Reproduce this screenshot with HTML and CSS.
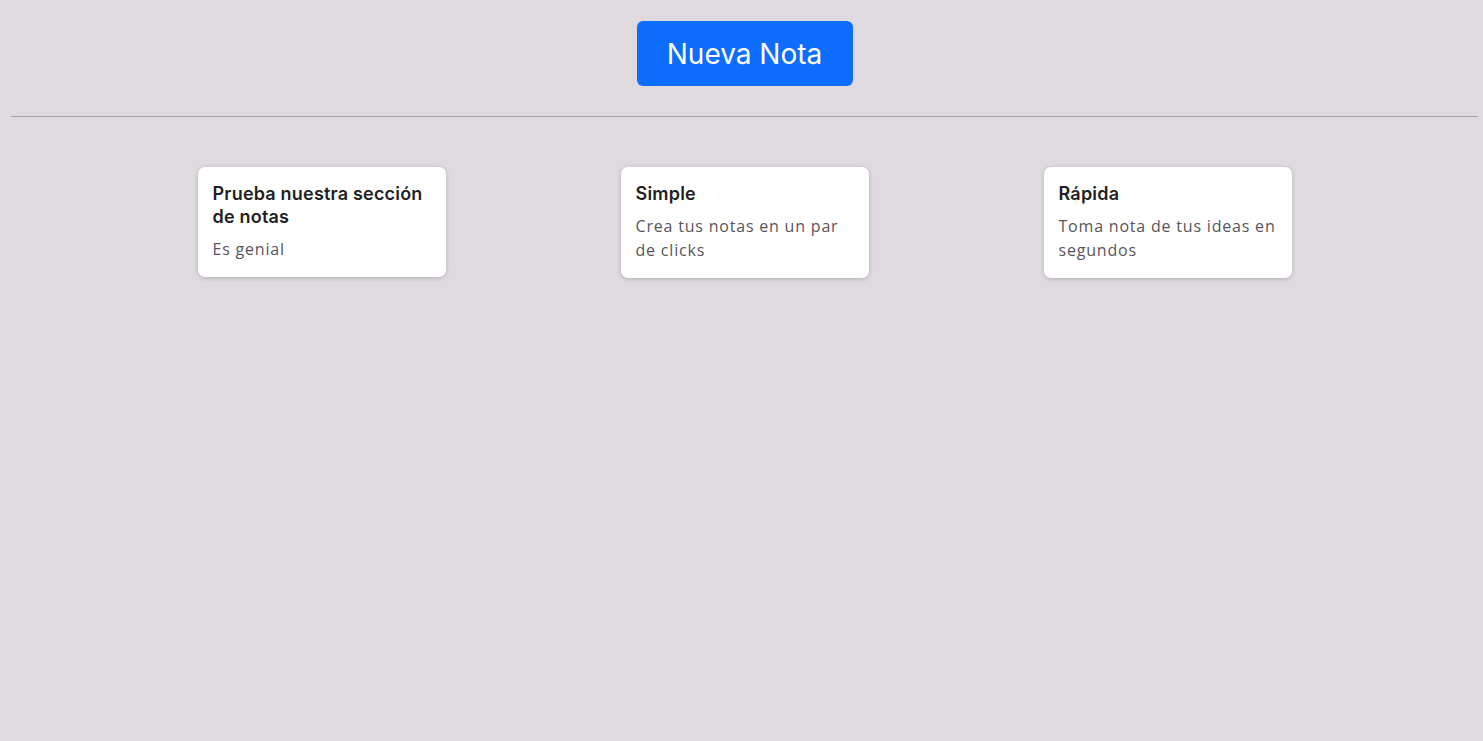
FILE: index.html
```html
<!DOCTYPE html>
<html lang="es">
<head>
<meta charset="utf-8">
<title>Notas</title>
<link rel="stylesheet" href="styles.css">
</head>
<body>
<header class="top">
  <button class="btn-new" type="button">Nueva Nota</button>
</header>
<hr class="divider">
<main class="cards">
  <article class="card">
    <h2 class="card-title">Prueba nuestra sección de notas</h2>
    <p class="card-text">Es genial</p>
  </article>
  <article class="card">
    <h2 class="card-title">Simple</h2>
    <p class="card-text">Crea tus notas en un par de clicks</p>
  </article>
  <article class="card">
    <h2 class="card-title">Rápida</h2>
    <p class="card-text">Toma nota de tus ideas en segundos</p>
  </article>
</main>
</body>
</html>
```

FILE: styles.css
```css
html, body {
  margin: 0;
  padding: 0;
}
body {
  background: #dfdadf;
  font-family: "Open Sans", "Liberation Sans", sans-serif;
  padding: 0 5px 0 11px;
  min-height: 741px;
  box-sizing: border-box;
}
.top {
  display: flex;
  justify-content: center;
  padding-top: 21px;
}
.btn-new {
  background: #0d6efd;
  color: #fff;
  border: none;
  border-radius: 6px;
  font-family: "Inter", "Liberation Sans", sans-serif;
  font-size: 28px;
  font-weight: 400;
  line-height: 40px;
  width: 216px;
  height: 65px;
  padding: 0;
  cursor: pointer;
}
.divider {
  margin: 30px 0 0 0;
  border: none;
  border-top: 1px solid #a8a4a8;
  height: 0;
}
.cards {
  display: flex;
  justify-content: center;
  align-items: flex-start;
  gap: 175px;
  padding-top: 50px;
}
.card {
  width: 248px;
  box-sizing: border-box;
  background: #fff;
  border-radius: 7px;
  box-shadow: 0 1px 4px rgba(0, 0, 0, 0.2);
  padding: 15px 15px 16px 15px;
}
.card-title {
  margin: 0 0 9px 0;
  font-family: "Inter", "Liberation Sans", sans-serif;
  font-size: 18px;
  font-weight: 600;
  line-height: 23px;
  color: #1f1f24;
  letter-spacing: 0.2px;
}
.card-text {
  margin: 0;
  font-family: "Open Sans", "Liberation Sans", sans-serif;
  font-size: 16px;
  line-height: 24px;
  color: #59555b;
  letter-spacing: 0.8px;
}
```
